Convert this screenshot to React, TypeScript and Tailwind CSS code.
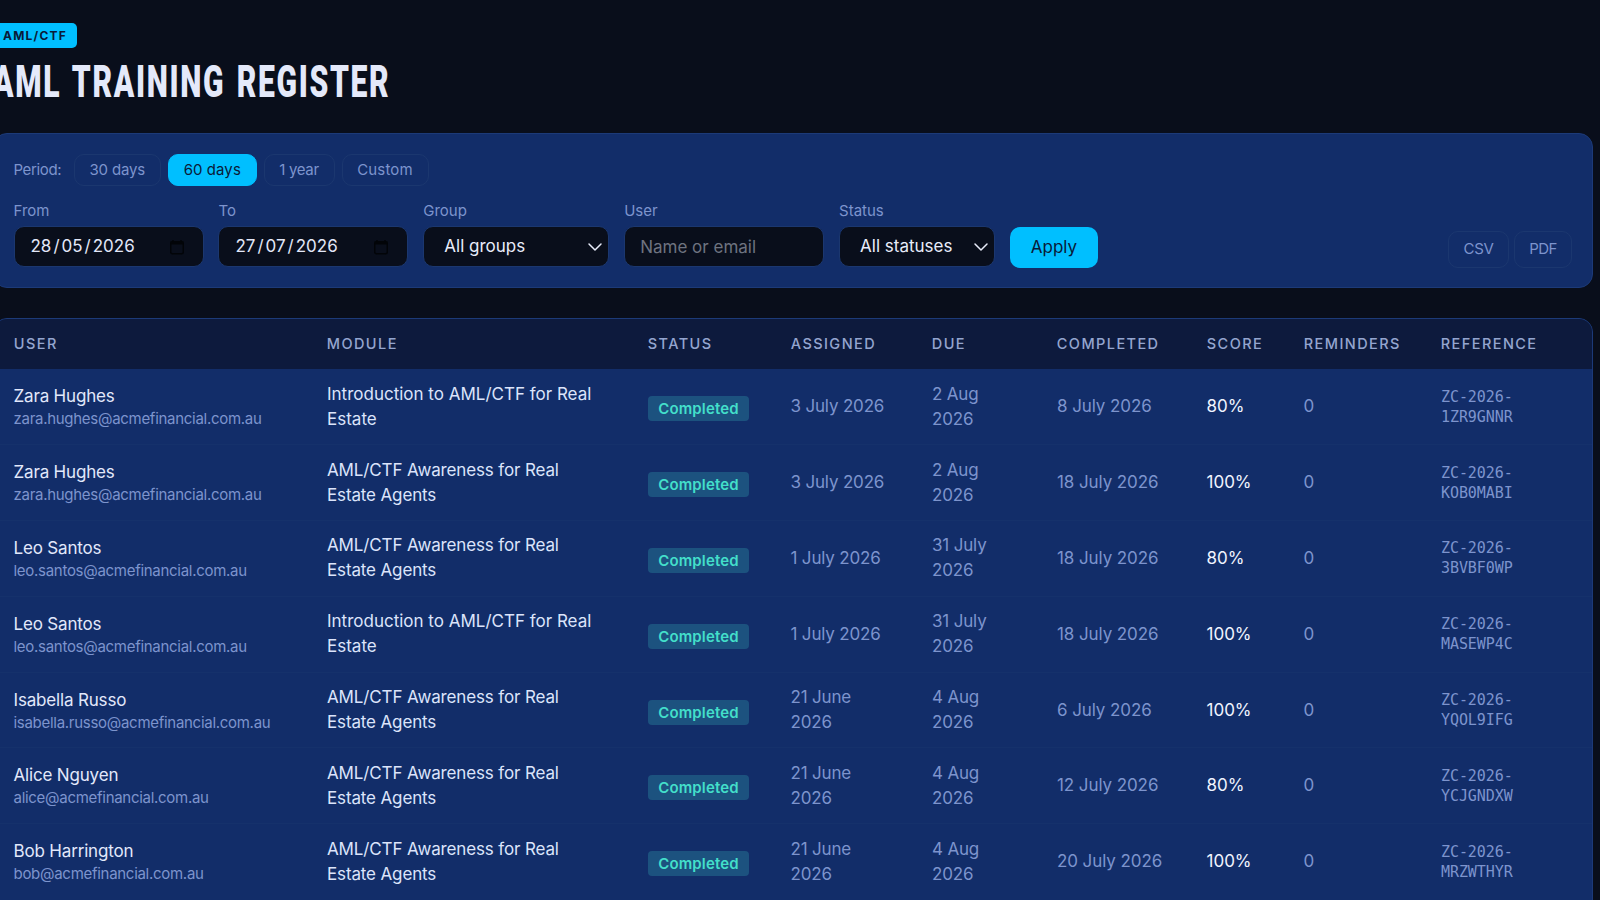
import { useState } from 'react';
import { ChevronDown } from 'lucide-react';

const periods = [
  { label: '30 days', width: 'w-[87.5px]', tracking: 'tracking-[-0.01em]' },
  { label: '60 days', width: 'w-[88.5px]', tracking: 'tracking-[0.005em]' },
  { label: '1 year', width: 'w-[71px]', tracking: 'tracking-[-0.02em]' },
  { label: 'Custom', width: 'w-[87px]', tracking: 'tracking-[0.01em]' },
];

const columns = [
  { label: 'User', width: 'w-[313px]' },
  { label: 'Module', width: 'w-[321px]' },
  { label: 'Status', width: 'w-[143px]' },
  { label: 'Assigned', width: 'w-[141px]' },
  { label: 'Due', width: 'w-[125px]' },
  { label: 'Completed', width: 'w-[150px]' },
  { label: 'Score', width: 'w-[97px]' },
  { label: 'Reminders', width: 'w-[137px]' },
  { label: 'Reference', width: 'w-[171px]' },
];

const intro = ['Introduction to AML/CTF for Real', 'Estate'];
const awareness = ['AML/CTF Awareness for Real', 'Estate Agents'];

const records = [
  { name: 'Zara Hughes', email: 'zara.hughes@acmefinancial.com.au', module: intro, assigned: ['3 July 2026'], due: ['2 Aug', '2026'], completed: '8 July 2026', score: '80%', reference: '1ZR9GNNR' },
  { name: 'Zara Hughes', email: 'zara.hughes@acmefinancial.com.au', module: awareness, assigned: ['3 July 2026'], due: ['2 Aug', '2026'], completed: '18 July 2026', score: '100%', reference: 'KOB0MABI' },
  { name: 'Leo Santos', email: 'leo.santos@acmefinancial.com.au', module: awareness, assigned: ['1 July 2026'], due: ['31 July', '2026'], completed: '18 July 2026', score: '80%', reference: '3BVBF0WP' },
  { name: 'Leo Santos', email: 'leo.santos@acmefinancial.com.au', module: intro, assigned: ['1 July 2026'], due: ['31 July', '2026'], completed: '18 July 2026', score: '100%', reference: 'MASEWP4C' },
  { name: 'Isabella Russo', email: 'isabella.russo@acmefinancial.com.au', module: awareness, assigned: ['21 June', '2026'], due: ['4 Aug', '2026'], completed: '6 July 2026', score: '100%', reference: 'YQOL9IFG' },
  { name: 'Alice Nguyen', email: 'alice@acmefinancial.com.au', module: awareness, assigned: ['21 June', '2026'], due: ['4 Aug', '2026'], completed: '12 July 2026', score: '80%', reference: 'YCJGNDXW' },
  { name: 'Bob Harrington', email: 'bob@acmefinancial.com.au', module: awareness, assigned: ['21 June', '2026'], due: ['4 Aug', '2026'], completed: '20 July 2026', score: '100%', reference: 'MRZWTHYR' },
];

function Lines({ lines }: { lines: string[] }) {
  return (
    <>
      {lines.map((line) => (
        <span key={line} className="block whitespace-nowrap">
          {line}
        </span>
      ))}
    </>
  );
}

function CalendarIcon() {
  return (
    <svg className="size-4 text-[#020408]" viewBox="0 0 16 16" fill="none" stroke="currentColor">
      <rect x="1.75" y="2.75" width="12.5" height="12" rx="1.5" strokeWidth="1.5" />
      <path d="M1.5 4h13" strokeWidth="3" />
      <path d="M4 1v2M12 1v2" strokeWidth="1.5" />
    </svg>
  );
}

function DateField({ label, value }: { label: string; value: string }) {
  const [day, month, year] = value.split('/');

  return (
    <div className="w-[190px]">
      <div className="text-[15px] leading-6 text-[#7d94cd]">{label}</div>
      <div className="mt-[3px] flex h-[41px] items-center justify-between rounded-[10px] border border-[#1b376f] bg-[#090e1b] pr-[18px] pl-4 text-[17px] text-[#e2e7f8]">
        <span className="flex gap-[2px]">
          <span>{day}</span>
          <span>/</span>
          <span>{month}</span>
          <span>/</span>
          <span>{year}</span>
        </span>
        <CalendarIcon />
      </div>
    </div>
  );
}

function SelectField({ label, value, width }: { label: string; value: string; width: string }) {
  return (
    <div className={width}>
      <div className="text-[15px] leading-6 text-[#7d94cd]">{label}</div>
      <div className="mt-[3px] flex h-[41px] items-center justify-between rounded-[10px] border border-[#1b376f] bg-[#090e1b] pr-px pl-5 text-[17px] text-[#e8ecfa]">
        <span className="pt-px">{value}</span>
        <ChevronDown className="size-[24px]" strokeWidth={1.5} />
      </div>
    </div>
  );
}

export default function App() {
  const [period, setPeriod] = useState('60 days');

  return (
    <main className="h-[900px] w-[1600px] overflow-hidden bg-[#090e1b] font-['Inter',sans-serif]">
      <header className="h-[133px] pt-[23px]">
        <div className="flex h-[25px] w-[77px] items-center rounded-r-[5px] bg-[#00bfff] pl-[3px] text-[12px] font-bold tracking-[0.1em] text-[#0a1a38]">
          AML/CTF
        </div>
        <h1 className="-ml-[7px] mt-[8px] w-fit origin-left scale-x-[0.684] font-['Roboto',sans-serif] text-[44px] leading-[52px] font-black tracking-[0.055em] [word-spacing:0.08em] whitespace-nowrap text-[#e4e9fa]">
          AML TRAINING REGISTER
        </h1>
      </header>

      <section className="mr-[7px] -ml-[7px] h-[155px] rounded-[14px] border border-[#1c3a78] bg-[#122d69] pr-5 pl-[19.5px] pt-5">
        <div className="flex items-center text-[15px] text-[#7d94cd]">
          <span className="w-[60px] tracking-[-0.025em]">Period:</span>
          <div className="flex gap-[7px]">
            {periods.map((item) => (
              <button
                key={item.label}
                type="button"
                onClick={() => setPeriod(item.label)}
                className={`h-8 rounded-[10px] border ${item.width} ${item.tracking} ${
                  period === item.label
                    ? 'border-[#00bfff] bg-[#00bfff] text-[#0a1a38]'
                    : 'border-[#1b376f]'
                }`}
              >
                {item.label}
              </button>
            ))}
          </div>
        </div>

        <div className="mt-[13px] flex items-end gap-[14.9px]">
          <DateField label="From" value="28/05/2026" />
          <DateField label="To" value="27/07/2026" />
          <SelectField label="Group" value="All groups" width="w-[186px]" />
          <div className="w-[200px]">
            <div className="text-[15px] leading-6 text-[#7d94cd]">User</div>
            <input
              type="text"
              placeholder="Name or email"
              className="mt-[3px] block h-[41px] w-full rounded-[10px] border border-[#1b376f] bg-[#090e1b] px-[15px] text-[17px] text-[#e8ecfa] outline-none placeholder:text-[#6e7380]"
            />
          </div>
          <SelectField label="Status" value="All statuses" width="w-[156px]" />
          <button type="button" className="-mb-px h-[41px] w-[88px] rounded-[10px] bg-[#00bfff] text-[17px] text-[#0a1a38]">
            Apply
          </button>
          <div className="-mb-px ml-auto flex gap-[5px] text-[15px] text-[#7d94cd]">
            <button type="button" className="h-[37px] w-[61px] rounded-[10px] border border-[#1b376f] tracking-[-0.02em]">
              CSV
            </button>
            <button type="button" className="h-[37px] w-[58px] rounded-[10px] border border-[#1b376f] tracking-[-0.04em]">
              PDF
            </button>
          </div>
        </div>
      </section>

      <section className="mt-[30px] mr-[7px] -ml-[7px] overflow-hidden rounded-t-[14px] border border-[#1c3a78] bg-[#122d69]">
        <table className="w-[1598px] table-fixed border-collapse text-left text-[17px] leading-[25px]">
          <thead className="bg-[#0d1a3d] text-[14.5px] text-[#94a5cf]">
            <tr className="h-[50px]">
              {columns.map((column) => (
                <th key={column.label} className={`pb-px pl-[19.8px] font-medium tracking-[0.098em] uppercase ${column.width}`}>
                  {column.label}
                </th>
              ))}
            </tr>
          </thead>
          <tbody className="text-[#7d94cd]">
            {records.map((record) => (
              <tr key={record.reference} className="h-[75.8px] border-b border-[#15316b] last:border-0">
                <td className="pt-[2px] pl-[19.5px]">
                  <div className="leading-[23px] tracking-[-0.01em] text-[#e2e8fb]">{record.name}</div>
                  <div className="text-[15px] leading-[22px] tracking-[-0.019em] whitespace-nowrap">{record.email}</div>
                </td>
                <td className={`pl-5 text-[#dce4fb] ${record.module === awareness ? 'tracking-[-0.008em]' : ''}`}>
                  <Lines lines={record.module} />
                </td>
                <td className="pt-1 pl-5">
                  <span className="flex h-[25px] w-[101px] items-center justify-center rounded-[4px] bg-[#1c527f] text-[15px] font-semibold tracking-[0.01em] text-[#43dfca]">
                    Completed
                  </span>
                </td>
                <td className="pl-[19.5px] tracking-[-0.01em]">
                  <Lines lines={record.assigned} />
                </td>
                <td className="pl-5 tracking-[-0.01em]">
                  <Lines lines={record.due} />
                </td>
                <td className="pl-5 tracking-[-0.005em] whitespace-nowrap">{record.completed}</td>
                <td className="pl-[19.5px] text-[#f0f4ff]">{record.score}</td>
                <td className="pl-[19.5px]">0</td>
                <td className="pl-5 font-['DejaVu_Sans_Mono',monospace] text-[15px] leading-5 tracking-[-0.005em]">
                  <Lines lines={['ZC-2026-', record.reference]} />
                </td>
              </tr>
            ))}
          </tbody>
        </table>
      </section>
    </main>
  );
}
